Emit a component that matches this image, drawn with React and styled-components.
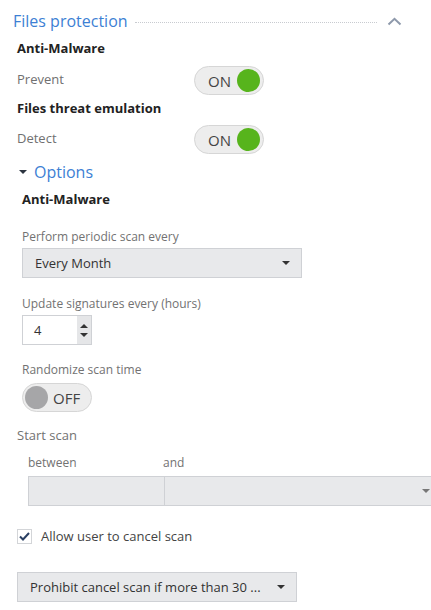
import React from 'react'
import styled, { createGlobalStyle } from 'styled-components'

const GlobalStyle = createGlobalStyle`
  body {
    margin: 0;
    background: #fff;
    font-family: 'Open Sans', 'Liberation Sans', sans-serif;
    overflow: hidden;
  }
`

const Page = styled.div`
  width: 431px;
  padding-top: 8px;
`

const SectionHeader = styled.div`
  display: flex;
  align-items: center;
  height: 26px;
  padding: 0 29px 0 13px;
`

const SectionTitle = styled.span`
  font-size: 16px;
  color: #3d7fd4;
  white-space: nowrap;
`

const DottedRule = styled.div`
  flex: 1;
  margin: 2px 10px 0 7px;
  border-top: 1px dotted #c8cbd0;
`

const Block = styled.div`
  padding-left: ${p => p.$indent ?? 17}px;
  margin-top: ${p => p.$top ?? 0}px;
`

const BoldTitle = styled.div`
  height: 20px;
  line-height: 20px;
  font-size: 13px;
  font-weight: 700;
  color: #222;
`

const SettingRow = styled.div`
  display: flex;
  align-items: center;
`

const SettingLabel = styled.span`
  width: 177px;
  font-size: 13px;
  color: #707070;
  padding-bottom: 4px;
`

const ToggleTrack = styled.div`
  box-sizing: border-box;
  width: 70px;
  height: 29px;
  border-radius: 15px;
  border: 1px solid #d6d6d6;
  background: #ededed;
  display: flex;
  align-items: center;
  flex-direction: ${p => (p.$on ? 'row' : 'row-reverse')};
  justify-content: ${p => (p.$on ? 'space-between' : 'flex-end')};
  gap: 5px;
  padding: ${p => (p.$on ? '0 3px 0 13px' : '0 0 0 2px')};
`

const ToggleText = styled.span`
  font-size: 15px;
  color: #444;
`

const Knob = styled.span`
  width: 23px;
  height: 23px;
  border-radius: 50%;
  background: ${p => (p.$on ? '#57b41c' : '#a6a6a8')};
`

const OptionsToggle = styled.div`
  display: flex;
  align-items: center;
  height: 24px;
  padding-left: 19px;
  gap: 7px;
  color: #3d7fd4;
  font-size: 16px;
`

const FieldLabel = styled.div`
  height: 18px;
  line-height: 18px;
  font-size: 12px;
  color: #727272;
`

const PlainLabel = styled.div`
  height: 18px;
  line-height: 18px;
  font-size: 13px;
  color: #727272;
`

const Select = styled.div`
  box-sizing: border-box;
  width: ${p => p.$width}px;
  height: 30px;
  margin-top: 2px;
  background: #e8e9eb;
  border: 1px solid #cfd1d5;
  display: flex;
  align-items: center;
  justify-content: space-between;
  padding: 0 11px 0 12px;
  font-size: 13px;
  color: #333;
`

const NumberBox = styled.div`
  box-sizing: border-box;
  width: 70px;
  height: 30px;
  margin-top: 2px;
  border: 1px solid #cfd1d5;
  display: flex;
`

const NumberValue = styled.div`
  flex: 1;
  display: flex;
  align-items: center;
  padding-left: 11px;
  font-size: 13px;
  color: #333;
`

const Spinner = styled.div`
  width: 14px;
  background: #e5e6e8;
  display: flex;
  flex-direction: column;
  align-items: center;
  justify-content: center;
  gap: 5px;
`

const ToggleHolder = styled.div`
  margin-top: 4px;
`

const RangeLabels = styled.div`
  display: grid;
  grid-template-columns: 135px 1fr;
  font-size: 12px;
  color: #727272;
  height: 18px;
  line-height: 18px;
`

const RangeInputs = styled.div`
  box-sizing: border-box;
  width: 413px;
  height: 30px;
  margin-top: 4px;
  display: grid;
  grid-template-columns: 135px 1fr;
  background: #e8e9eb;
  border: 1px solid #cfd1d5;
`

const RangeCell = styled.div`
  border-left: ${p => (p.$divider ? '1px solid #cfd1d5' : 'none')};
  display: flex;
  align-items: center;
  justify-content: flex-end;
  padding-right: 10px;
`

const CheckRow = styled.label`
  display: flex;
  align-items: center;
  gap: 9px;
  font-size: 13px;
  color: #444;
`

const CheckBox = styled.span`
  box-sizing: border-box;
  width: 15px;
  height: 15px;
  border: 1px solid #d3d5d8;
  display: flex;
  align-items: center;
  justify-content: center;
`

const Caret = ({ up, color = '#333', size = 8 }) => (
  <svg width={size} height={size / 2} viewBox="0 0 8 4">
    <path d={up ? 'M0 4 L4 0 L8 4 Z' : 'M0 0 L8 0 L4 4 Z'} fill={color} />
  </svg>
)

const Toggle = ({ on }) => (
  <ToggleTrack $on={on}>
    <ToggleText>{on ? 'ON' : 'OFF'}</ToggleText>
    <Knob $on={on} />
  </ToggleTrack>
)

export default function App() {
  return (
    <>
      <GlobalStyle />
      <Page>
        <SectionHeader>
          <SectionTitle>Files protection</SectionTitle>
          <DottedRule />
          <svg width="15" height="9" viewBox="0 0 15 9">
            <path d="M1.5 7.5 L7.5 1.8 L13.5 7.5" fill="none" stroke="#8e99ab" strokeWidth="2" />
          </svg>
        </SectionHeader>

        <Block $top={4}>
          <BoldTitle>Anti-Malware</BoldTitle>
        </Block>
        <Block $top={8}>
          <SettingRow>
            <SettingLabel>Prevent</SettingLabel>
            <Toggle on />
          </SettingRow>
        </Block>
        <Block $top={3}>
          <BoldTitle>Files threat emulation</BoldTitle>
        </Block>
        <Block $top={7}>
          <SettingRow>
            <SettingLabel>Detect</SettingLabel>
            <Toggle on />
          </SettingRow>
        </Block>

        <Block $indent={0} $top={6}>
          <OptionsToggle>
            <Caret color="#2c3440" />
            Options
          </OptionsToggle>
        </Block>

        <Block $indent={22} $top={5}>
          <BoldTitle>Anti-Malware</BoldTitle>
        </Block>

        <Block $indent={22} $top={19}>
          <FieldLabel>Perform periodic scan every</FieldLabel>
          <Select $width={280}>
            Every Month
            <Caret />
          </Select>
        </Block>

        <Block $indent={22} $top={17}>
          <FieldLabel>Update signatures every (hours)</FieldLabel>
          <NumberBox>
            <NumberValue>4</NumberValue>
            <Spinner>
              <Caret up size={8} />
              <Caret size={8} />
            </Spinner>
          </NumberBox>
        </Block>

        <Block $indent={22} $top={16}>
          <FieldLabel>Randomize scan time</FieldLabel>
          <ToggleHolder>
            <Toggle on={false} />
          </ToggleHolder>
        </Block>

        <Block $indent={17} $top={14}>
          <PlainLabel>Start scan</PlainLabel>
        </Block>

        <Block $indent={28} $top={10}>
          <RangeLabels>
            <span>between</span>
            <span>and</span>
          </RangeLabels>
          <RangeInputs>
            <RangeCell />
            <RangeCell $divider>
              <Caret color="#777" />
            </RangeCell>
          </RangeInputs>
        </Block>

        <Block $indent={17} $top={21}>
          <CheckRow>
            <CheckBox>
              <svg width="11" height="9" viewBox="0 0 11 9">
                <path d="M1 4.5 L4 7.5 L10 1" fill="none" stroke="#2a3f63" strokeWidth="2" />
              </svg>
            </CheckBox>
            Allow user to cancel scan
          </CheckRow>
        </Block>

        <Block $indent={17} $top={27}>
          <Select $width={280}>
            Prohibit cancel scan if more than 30 ...
            <Caret />
          </Select>
        </Block>
      </Page>
    </>
  )
}
